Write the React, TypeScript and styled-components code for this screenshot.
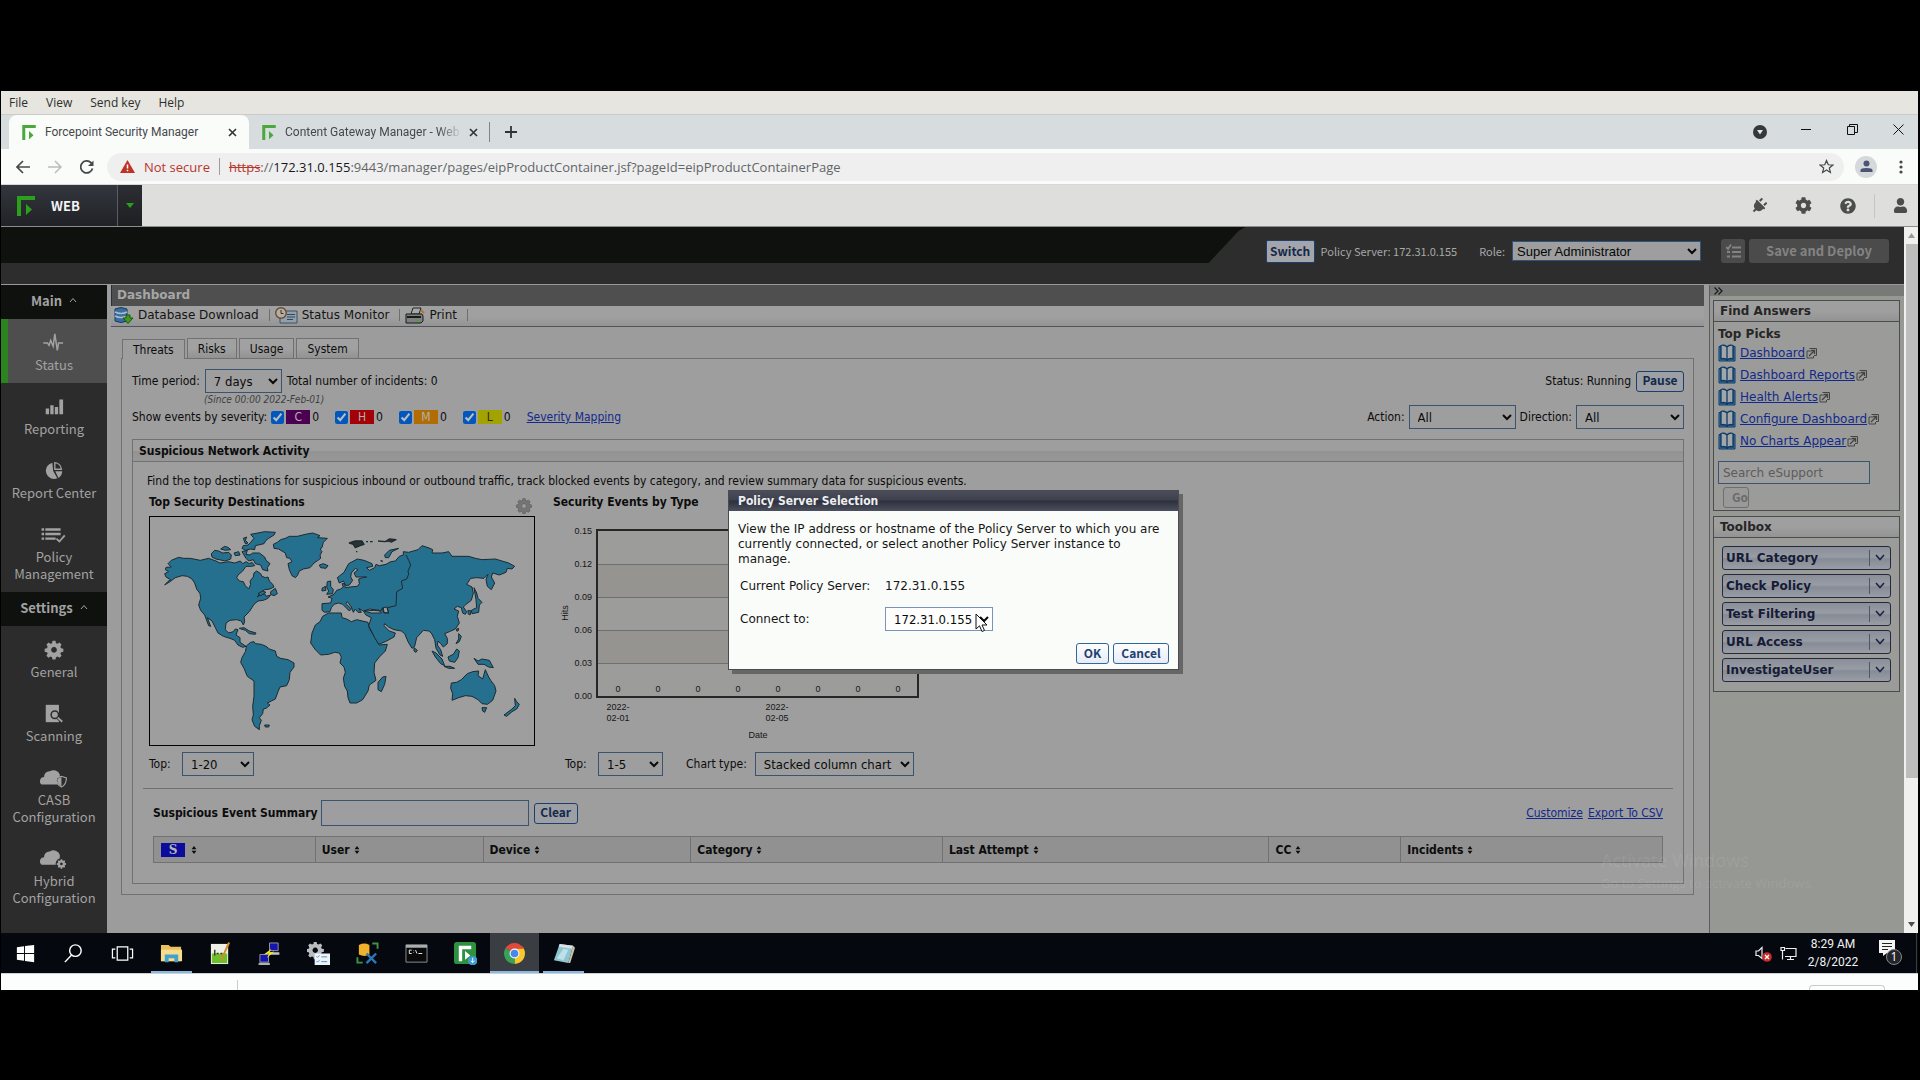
import React from 'react';
import styled, { createGlobalStyle, css } from 'styled-components';
import { FaPlug, FaCog, FaQuestionCircle, FaUser } from 'react-icons/fa';

const tahoma = '"DejaVu Sans Condensed", "DejaVu Sans", sans-serif';
const verdana = '"DejaVu Sans", sans-serif';
const source = '"Noto Sans CJK SC", "Noto Sans", sans-serif';
const segoe = '"Open Sans", "Noto Sans", sans-serif';
const segoeSmall = 'Roboto, "Open Sans", sans-serif';

const Global = createGlobalStyle`
  * { box-sizing: border-box; }
  body { margin: 0; background: #000; font: 12px/16px ${tahoma}; color: #0c0c0c; }
  h1, h2, h3, p { margin: 0; font-size: 12px; line-height: 16px; }
  button, input, select { font: inherit; color: inherit; margin: 0; }
  button { padding: 0; cursor: pointer; }
  svg { display: block; flex: none; }
`;

/* ---------- shell ---------- */
const Screen = styled.div`
  min-height: 100vh;
  padding: 91px 2px 90px 1px;
  display: flex;
  flex-direction: column;
`;
const Row = styled.div<{ $gap?: number }>`
  display: flex;
  align-items: center;
  gap: ${p => p.$gap ?? 0}px;
`;
const Spacer = styled.div`flex: 1;`;

const MenuBar = styled.nav`
  height: 24px;
  display: flex;
  align-items: center;
  gap: 18px;
  padding-left: 8px;
  background: #e6e5df;
  border-bottom: 1px solid #cbccca;
  font: 12px/16px ${segoe};
  color: #2c2e2e;
`;
const MenuItem = styled.button`
  border: 0;
  background: none;
`;

/* ---------- browser ---------- */
const TabStrip = styled.div`
  height: 34px;
  display: flex;
  align-items: center;
  padding-left: 8px;
  background: #d7dcdf;
  font: 12px/16px ${segoeSmall};
  color: #45494c;
`;
const BrowserTab = styled.div<{ $active?: boolean }>`
  width: 240px;
  height: 34px;
  display: flex;
  align-items: center;
  gap: 9px;
  padding: 0 10px 0 13px;
  border-radius: 8px 8px 0 0;
  background: ${p => (p.$active ? '#fafcfa' : 'transparent')};
`;
const TabName = styled.span<{ $fade?: boolean }>`
  flex: 1;
  white-space: nowrap;
  ${p => p.$fade && css`mask-image: linear-gradient(90deg, #000 88%, transparent 102%);`}
`;
const GlyphButton = styled.button<{ $w?: number }>`
  width: ${p => p.$w ?? 14}px;
  height: 24px;
  display: grid;
  place-items: center;
  border: 0;
  background: none;
  color: inherit;
`;
const TabDivider = styled.div`
  width: 1px;
  height: 20px;
  margin-right: 14px;
  background: #7f8488;
`;
const WindowButtons = styled.div`
  display: flex;
  align-items: center;
  gap: 22px;
  padding: 0 8px 6px 0;
  color: #111;
`;
const AddressBar = styled.div`
  height: 36px;
  display: flex;
  align-items: center;
  gap: 8px;
  padding: 0 6px 0 10px;
  background: #fafcfa;
  border-bottom: 1px solid #d6d8d6;
  color: #4c5054;
`;
const Omnibox = styled.div`
  flex: 1;
  height: 28px;
  display: flex;
  align-items: center;
  gap: 9px;
  padding: 0 10px 0 13px;
  border-radius: 14px;
  background: #efefef;
  font: 13px/20px ${segoe};
  color: #626568;
`;
const Danger = styled.span`color: #b8362c;`;
const Struck = styled.span`color: #b8362c; text-decoration: line-through;`;
const Host = styled.span`color: #17191a;`;
const Bar = styled.span`width: 1px; height: 17px; background: #9b9d9f;`;
const Avatar = styled.div`
  width: 22px;
  height: 22px;
  display: grid;
  place-items: center;
  border-radius: 50%;
  background: #d5d9dc;
  margin: 0 5px 0 3px;
`;

/* ---------- product header ---------- */
const AppBar = styled.header`
  height: 42px;
  display: flex;
  align-items: stretch;
  background: #dedfdd;
  border-bottom: 1px solid #8c8e8c;
  color: #4b4c4c;
`;
const Brand = styled.div`
  width: 116px;
  display: flex;
  align-items: center;
  gap: 16px;
  padding-left: 16px;
  background: linear-gradient(#33363d, #202226);
  font: 700 13px/20px ${source};
  color: #f3f4f4;
`;
const BrandMenu = styled.button`
  width: 25px;
  display: grid;
  place-items: center;
  border: 0;
  border-left: 1px solid #5a5d61;
  background: linear-gradient(#2c2e33, #1d1f22);
`;
const AppIcons = styled.div`
  display: flex;
  align-items: center;
  gap: 28px;
  padding-right: 10px;
`;
const IconDivider = styled.div`width: 1px; height: 24px; background: #c4c6c4; margin: 0 -10px;`;
const PlugWrap = styled.span`transform: rotate(45deg);`;

/* ---------- page ---------- */
const Viewport = styled.div`flex: 1; display: flex;`;
const Page = styled.div`
  flex: 1;
  min-width: 0;
  position: relative;
  display: flex;
  flex-direction: column;
  background: #9c9c9c;
`;
const ScrollTrack = styled.div`
  width: 14px;
  display: flex;
  flex-direction: column;
  align-items: center;
  justify-content: space-between;
  background: #f0f0ef;
  padding: 6px 0;
`;
const ScrollThumb = styled.div`
  width: 12px;
  height: 77%;
  margin: 6px 0 auto 2px;
  background: #bdbdbd;
`;
const TopBand = styled.div`
  height: 58px;
  display: flex;
  align-items: flex-start;
  gap: 20px;
  padding-right: 15px;
  background: #2d2d2d;
  border-bottom: 1px solid #999;
`;
const Wedge = styled.div`
  flex: 1;
  height: 36px;
  background: #0f110e;
  clip-path: polygon(0 0, 100% 0, calc(100% - 7px) 4px, calc(100% - 37px) 100%, 0 100%);
`;
const TopControls = styled.div`
  height: 48px;
  display: flex;
  align-items: center;
  font: 11px/16px ${source};
  color: #a8a8a8;
`;
const PolicyText = styled.span`margin: 0 22px 0 6px;`;
const RoleLabel = styled.label`margin-right: 7px;`;
const RoleSelect = styled.select`
  width: 189px;
  height: 20px;
  margin-right: 20px;
  border: 1px solid #2f5380;
  background: #9e9e9e;
  font: 13px/16px "Liberation Sans", Arial, sans-serif;
  color: #060606;
`;
const SwitchButton = styled.button`
  width: 49px;
  height: 23px;
  border: 1px solid #1f3f70;
  border-radius: 2px;
  background: #a3a5ab;
  font: 700 12px/16px ${source};
  color: #14294a;
`;
const FlatButton = styled.button<{ $w: number }>`
  width: ${p => p.$w}px;
  height: 24px;
  display: grid;
  place-items: center;
  border: 0;
  border-radius: 3px;
  background: #4b4b4b;
  font: 700 13px/20px ${source};
  color: #838383;
`;
const Body = styled.div`flex: 1; display: flex;`;

/* ---------- side navigation ---------- */
const SideNav = styled.nav`
  width: 106px;
  background: #2c2c2c;
  font: 13px/17px ${source};
  color: #a2a2a2;
`;
const NavHead = styled.button`
  width: 100%;
  height: 34px;
  display: flex;
  align-items: center;
  justify-content: center;
  gap: 7px;
  padding-bottom: 4px;
  border: 0;
  background: #0f110e;
  font: 700 13px/17px ${source};
`;
const NavItem = styled.a<{ $active?: boolean; $tall?: boolean }>`
  height: ${p => (p.$tall ? 81 : 64)}px;
  display: flex;
  flex-direction: column;
  align-items: center;
  gap: 4px;
  padding-top: 14px;
  text-align: center;
  text-decoration: none;
  color: inherit;
  ${p => p.$active && css`background: linear-gradient(90deg, #2c8420 7px, #4e4e4e 7px);`}
`;

/* ---------- centre ---------- */
const Centre = styled.main`
  flex: 1;
  min-width: 0;
  padding: 0 5px 0 4px;
`;
const TitleBar = styled.h1`
  height: 21px;
  padding-left: 5px;
  background: #4f4f4f;
  border-left: 1px solid #2a2d38;
  font: 700 12px/20px ${verdana};
  color: #a6a6a6;
`;
const ToolBar = styled.div`
  height: 21px;
  display: flex;
  align-items: center;
  gap: 5px;
  padding: 0 0 2px 3px;
  background: linear-gradient(#a0a0a0 55%, #949494);
  border-bottom: 1px solid #4f535a;
  font: 12px/16px ${verdana};
  color: #141414;
`;
const ToolButton = styled.button`
  display: flex;
  align-items: center;
  gap: 4px;
  border: 0;
  background: none;
`;
const ToolDivider = styled.span`width: 1px; height: 12px; margin-left: 5px; background: #6e6e6e;`;
const TabList = styled.div`
  display: flex;
  align-items: flex-end;
  gap: 2px;
  height: 31px;
  margin: 0 10px;
  padding-left: 1px;
`;
const PageTab = styled.button<{ $active?: boolean }>`
  height: 20px;
  padding: 1px 10px 0;
  border: 1px solid #717171;
  border-bottom: 0;
  background: ${p => (p.$active ? '#9e9e9e' : 'linear-gradient(#a1a1a1 50%, #929292)')};
  line-height: 18px;
  ${p => p.$active && css`margin-bottom: -1px; z-index: 1;`}
`;
const Panel = styled.section`
  margin: 0 10px;
  padding: 10px 9px 10px 10px;
  border: 1px solid #717171;
  background: #9e9e9e;
`;
const FilterRow = styled.div<{ $gap?: number }>`
  height: 24px;
  display: flex;
  align-items: center;
  gap: ${p => p.$gap ?? 5}px;
`;
const Since = styled.div`
  height: 12px;
  padding-left: 72px;
  font: italic 10px/14px ${tahoma};
  color: #3e3e3e;
`;
const Select = styled.select<{ $w: number }>`
  width: ${p => p.$w}px;
  height: 24px;
  padding: 0 0 0 4px;
  border: 1px solid #3a536f;
  background: #9e9e9e;
  font: 13px/16px ${tahoma};
  color: #0a0a0a;
`;
const SeverityGroup = styled.label`
  display: flex;
  align-items: center;
  gap: 2px;
  margin-right: 12px;
`;
const Check = styled.input`
  width: 13px;
  height: 13px;
  filter: brightness(0.74);
`;
const Badge = styled.span<{ $bg: string; $fg?: string }>`
  width: 24px;
  height: 14px;
  background: ${p => p.$bg};
  color: ${p => p.$fg ?? '#b0b0b0'};
  text-align: center;
  line-height: 14px;
`;
const Link = styled.a`color: #12298c; text-decoration: underline;`;
const SmallButton = styled.button<{ $w: number; $bright?: boolean }>`
  width: ${p => p.$w}px;
  height: 21px;
  padding-bottom: 2px;
  border: 1px solid ${p => (p.$bright ? '#35659d' : '#1d3f6c')};
  border-radius: 3px;
  background: ${p => (p.$bright ? 'linear-gradient(#fdfefe, #e6ebf6)' : '#9c9fa4')};
  font: 700 12px/16px ${source};
  color: ${p => (p.$bright ? '#1f3f70' : '#132a4c')};
`;
const Card = styled.section`
  margin-top: 10px;
  border: 1px solid #717171;
`;
const CardHead = styled.h2`
  height: 22px;
  padding-left: 6px;
  background: linear-gradient(#9e9e9e 50%, #939393 50%, #979797);
  border-bottom: 1px solid #717171;
  line-height: 22px;
`;
const Description = styled.p`padding: 11px 14px 5px;`;
const Columns = styled.div`
  display: flex;
  padding-left: 16px;
`;
const Column = styled.div<{ $w: number }>`width: ${p => p.$w}px;`;
const ColumnHead = styled.div`
  height: 22px;
  width: 386px;
  display: flex;
  justify-content: space-between;
  padding-right: 3px;
`;
const MapFrame = styled.div`
  width: 386px;
  height: 230px;
  border: 1px solid #000;
`;
const ControlRow = styled.div<{ $indent?: number }>`
  height: 24px;
  display: flex;
  align-items: center;
  gap: 8px;
  margin-top: 6px;
  padding-left: ${p => p.$indent ?? 0}px;
`;
const TopLabel = styled.label`width: 25px;`;
const ChartLabel = styled.label`margin-left: 15px;`;
const Rule = styled.hr`
  height: 1px;
  margin: 12px 10px 11px;
  border: 0;
  background: #717171;
`;
const Summary = styled.div`padding: 0 20px 20px;`;
const SummaryRow = styled.div`
  display: flex;
  align-items: center;
  gap: 5px;
  height: 26px;
  margin-bottom: 10px;
`;
const SummaryInput = styled.input`
  width: 208px;
  height: 26px;
  margin-left: -2px;
  border: 1px solid #3a536f;
  background: #9e9ea0;
`;
const EventTable = styled.table`
  width: 100%;
  table-layout: fixed;
  border-collapse: collapse;
`;
const Th = styled.th<{ $share: number }>`
  width: ${p => p.$share / 15.11}%;
  height: 26px;
  padding: 0 6px;
  border: 1px solid #717171;
  background: #909190;
  text-align: left;
`;
const SBadge = styled.span`
  width: 24px;
  height: 14px;
  margin: 0 2px 0 1px;
  background: #0b0b9c;
  color: #b5b5b5;
  font: 700 12px/14px "DejaVu Serif", serif;
  text-align: center;
`;

/* ---------- right pane ---------- */
const Aside = styled.aside`
  width: 195px;
  background: #969894;
  border-left: 1px solid #5c5d5c;
  font: 12px/16px ${verdana};
  color: #262626;
`;
const AsideTop = styled.button`
  width: 100%;
  height: 11px;
  display: flex;
  align-items: center;
  padding-left: 4px;
  border: 0;
  background: #787a77;
`;
const AsideBox = styled.section`
  margin: 4px 4px 5px 3px;
  border: 1px solid #4b4c4e;
  background: #9b9c9a;
`;
const AsideHead = styled.h2`
  height: 21px;
  padding-left: 6px;
  border-bottom: 1px solid #4b4c4e;
  background: linear-gradient(#9e9f9e 50%, #929392);
  line-height: 20px;
`;
const Picks = styled.div`padding: 4px 4px 2px;`;
const PickItem = styled.div`
  height: 22px;
  display: flex;
  align-items: center;
  gap: 4px;
`;
const PickLink = styled(Link)`margin-right: -3px;`;
const Search = styled.input`
  width: 152px;
  height: 23px;
  margin: 9px 0 3px;
  padding: 0 4px;
  border: 1px solid #3a536f;
  background: #9e9e9e;
  &::placeholder { color: #5c5c5c; opacity: 1; }
`;
const GoButton = styled.button`
  width: 26px;
  height: 21px;
  display: block;
  margin-left: 5px;
  padding: 0 0 2px 8px;
  border: 1px solid #6e6f6e;
  border-radius: 3px;
  background: #989998;
  font: 700 12px/16px ${source};
  color: #6b6b6b;
`;
const Tools = styled.div`
  display: flex;
  flex-direction: column;
  gap: 4px;
  padding: 8px 4px 9px 8px;
`;
const ToolItem = styled.button`
  height: 24px;
  display: flex;
  align-items: center;
  justify-content: space-between;
  padding: 0 5px 1px 3px;
  margin-right: 4px;
  border: 1px solid #232a3c;
  border-radius: 3px;
  background: linear-gradient(#8a8e98, #989ca4 45%, #868b96 55%, #9a9da4);
  font-weight: 700;
  color: #161b36;
`;
const ToolChevron = styled.span`
  height: 16px;
  display: grid;
  place-items: center;
  padding-left: 5px;
  border-left: 1px solid #4f566a;
`;

/* ---------- dialog ---------- */
const Overlay = styled.div`
  position: absolute;
  inset: 0 0 0 2px;
  display: flex;
  align-items: flex-start;
  justify-content: center;
  padding-top: 263px;
`;
const Dialog = styled.div`
  width: 451px;
  border: 1px solid #4a4b50;
  background: #fafcfa;
  box-shadow: 4px 4px 0 #666;
  font: 12px/15px ${verdana};
  color: #161616;
`;
const DialogHead = styled.h2`
  height: 20px;
  padding-left: 9px;
  background: linear-gradient(#4b4e5a, #3d404d 45%, #2d303c 50%, #4c4f5e);
  font: 700 12px/20px ${tahoma};
  color: #eeeff1;
`;
const DialogBody = styled.div`padding: 11px 9px 5px;`;
const DialogGrid = styled.div`
  display: grid;
  grid-template-columns: 145px auto;
  align-items: center;
  row-gap: 13px;
  padding: 12px 0 12px 2px;
  justify-content: start;
`;
const DialogSelect = styled(Select)`
  border-color: #7d92b8;
  background: #fdfefd;
`;
const SelectWrap = styled.div`position: relative; height: 24px;`;
const Cursor = styled.svg`position: absolute; left: 90px; top: 6px;`;
const DialogButtons = styled.div`
  display: flex;
  justify-content: flex-end;
  gap: 4px;
`;
const Watermark = styled.div`
  position: absolute;
  right: 71px;
  bottom: 40px;
  width: 232px;
  font: 13px/20px ${segoe};
  color: rgba(255, 255, 255, 0.09);
  white-space: nowrap;
`;
const WatermarkTitle = styled.div`font-size: 18px; line-height: 26px;`;

/* ---------- taskbar ---------- */
const TaskBar = styled.footer`
  height: 40px;
  display: flex;
  align-items: stretch;
  background: #05080f;
  color: #f2f2f2;
`;
const TaskButton = styled.button<{ $open?: boolean; $active?: boolean }>`
  width: 49px;
  display: flex;
  flex-direction: column;
  align-items: center;
  justify-content: center;
  position: relative;
  border: 0;
  background: ${p => (p.$active ? '#3a3d42' : 'none')};
  &:first-of-type { width: 48px; }
  &::after {
    content: '';
    position: absolute;
    bottom: 0;
    left: ${p => (p.$active ? 0 : 4)}px;
    right: ${p => (p.$active ? 0 : 4)}px;
    height: ${p => (p.$open || p.$active ? 2 : 0)}px;
    background: #8ab8e4;
  }
`;
const Tray = styled.div`
  display: flex;
  align-items: center;
  gap: 8px;
  margin-right: 1px;
  padding-right: 12px;
  border-right: 1px solid #3a3d42;
`;
const Clock = styled.div`
  width: 56px;
  margin-right: 9px;
  text-align: center;
  font: 12px/18px ${segoeSmall};
`;
const BottomStrip = styled.div`
  height: 17px;
  display: flex;
  align-items: flex-end;
  justify-content: space-between;
  padding: 0 33px 0 236px;
  background: #fcfdfd;
  border-top: 1px solid #ccd2d4;
`;
const StripMark = styled.div`width: 1px; height: 10px; background: #c9cbcc;`;
const StripBox = styled.div`
  width: 76px;
  height: 5px;
  border: 1px solid #c9cbcc;
  border-bottom: 0;
  border-radius: 4px 4px 0 0;
`;

/* ---------- drawings ---------- */
const Logo = ({ w, h, c }: { w: number; h: number; c: string }) => (
  <svg width={w} height={h} viewBox="0 0 18 20">
    <path d="M0 0H18V4H4V20H0Z" fill={c} />
    <path d="M9 8L15 13.500 9 19Z" fill={c} />
  </svg>
);
const Cross = () => (
  <svg width="9" height="9" viewBox="0 0 9 9"><path d="M1 1L8 8M8 1L1 8" stroke="#303336" strokeWidth="1.6" /></svg>
);
const Caret = () => (
  <svg width="8" height="6" viewBox="0 0 8 6"><path d="M1 5L4 1.500 7 5" fill="none" stroke="#a2a2a2" /></svg>
);
const SortMark = () => (
  <svg width="6" height="8" viewBox="0 0 7 10"><path d="M3.500 0L6.500 4H.5ZM3.500 10L.5 6H6.500Z" fill="#0c0c0c" /></svg>
);
const Book = () => (
  <svg width="18" height="18" viewBox="0 0 18 18">
    <path d="M1 2.500H3V15H9L9 17H1ZM17 2.500H15V15H9V17H17Z" fill="#3c7ca8" stroke="#0f3a66" />
    <path d="M9 3C7.500 1 4.500 .8 3 1.500V15C5 14.200 7.500 14.500 9 16C10.500 14.500 13 14.200 15 15V1.500C13.500 .8 10.500 1 9 3ZM9 3V16" fill="#a3a6a8" stroke="#0f3a66" strokeWidth="1.300" />
  </svg>
);
const External = () => (
  <svg width="11" height="11" viewBox="0 0 11 11">
    <path d="M3.500 .5H10.500V7.500H8M5 3L1 3V10H7.500V8" fill="none" stroke="#444" />
    <path d="M3 8L8 3M5 2.500H8.500V6" fill="none" stroke="#444" strokeWidth="1.400" />
  </svg>
);
const gearPath = 'M10.200 1h3.600l.6 2.800 1.900.8 2.400-1.500 2.500 2.500-1.500 2.400.8 1.900 2.800.6v3.600l-2.800.6-.8 1.900 1.500 2.400-2.500 2.500-2.400-1.500-1.900.8-.6 2.800h-3.600l-.6-2.800-1.900-.8-2.400 1.500-2.500-2.500 1.500-2.400-.8-1.900-2.800-.6v-3.600l2.800-.6.8-1.900-1.500-2.400 2.500-2.500 2.400 1.500 1.900-.8ZM12 8.500a3.500 3.500 0 1 0 .01 0Z';

const navIcons: Record<string, React.ReactNode> = {
  Status: <path d="M0 12H5L7 15 9 9 12 16 14 1 17 21 18.500 12H24" fill="none" stroke="currentColor" strokeWidth="1.800" transform="translate(-1)" />,
  Reporting: <path d="M2 14h4v7H2zM7.500 10h4v11h-4zM13 12h4v9h-4zM18.500 3h4.500v18h-4.500z" fill="currentColor" />,
  'Report Center': <g fill="currentColor"><path d="M10 2A10 10 0 1 0 16 21L11 12Z" /><path d="M13 2A9 9 0 0 1 21 10H13Z" fill="none" stroke="currentColor" strokeWidth="1.600" /><path d="M13.500 12.500H22A10 10 0 0 1 17.500 20.500Z" /></g>,
  'Policy Management': <g fill="currentColor"><path d="M-3 4h3v3h-3zM-3 9.500h3v3h-3zM-3 15h3v3h-3zM1.500 4H20v3H1.500zM1.500 9.500H20v3H1.500zM1.500 15H14v3H1.500z" /><path d="M15 16.500L18.500 20 25 12.500" fill="none" stroke="currentColor" strokeWidth="2.200" /></g>,
  General: <path d={gearPath} fill="currentColor" fillRule="evenodd" />,
  Scanning: <g><path d="M2 1H18V22H2Z" fill="currentColor" /><circle cx="13" cy="13" r="4.500" fill="#a2a2a2" stroke="#2c2c2c" strokeWidth="1.800" /><path d="M16 16L22 21.500" stroke="#2c2c2c" strokeWidth="4" /><path d="M16.500 16.500L22 21.500" stroke="currentColor" strokeWidth="2.400" /></g>,
  'CASB Configuration': <g><path d="M-3 20A5 5 0 0 1 0 11 6.500 6.500 0 0 1 7 4 8 8 0 0 1 19 8V20Z" fill="currentColor" /><path d="M15 12L21 10 27 12C27 18 25 21 21 23 17 21 15 18 15 12Z" fill="#2c2c2c" stroke="currentColor" strokeWidth="1.400" /><path d="M21 11L16 13C16 18 18 21 21 22Z" fill="currentColor" /></g>,
  'Hybrid Configuration': <g><path d="M-3 19A5 5 0 0 1 0 10 6.500 6.500 0 0 1 7 3 8 8 0 0 1 19 7V19Z" fill="currentColor" /><circle cx="21" cy="18" r="7" fill="#2c2c2c" /><path d={gearPath} fill="currentColor" fillRule="evenodd" transform="translate(15 12) scale(.5)" /></g>,
};
const NavGlyph = ({ name }: { name: string }) => (
  <svg width="20" height="19" viewBox="0 0 24 23" overflow="visible">{navIcons[name]}</svg>
);

const land = [
  'M108 286L118 275 126 270 112 262 108 252 120 246 110 240 112 233 128 232 118 222 128 212 150 203 165 206 185 206 215 212 240 206 262 214 274 220 300 216 318 220 335 214 342 222 352 216 362 222 370 218 378 228 368 230 352 230 342 244 328 256 324 264 332 274 344 276 350 288 360 298 366 284 364 274 374 262 376 250 384 244 396 252 400 260 410 264 418 262 422 274 432 284 436 292 424 298 408 300 396 308 386 322 398 314 408 312 412 320 426 316 418 326 404 332 388 334 376 344 362 366 346 382 348 396 344 406 338 394 324 390 304 392 292 400 290 420 300 430 314 426 320 418 328 420 322 436 334 444 334 458 346 466 352 470 342 473 328 466 318 452 304 446 284 440 268 430 260 414 250 394 236 384 246 410 240 408 228 376 216 362 210 346 216 326 214 312 204 298 198 280 190 268 176 260 160 258 140 264 124 276Z',
  'M434 164L446 158 456 150 470 146 482 140 506 140 530 134 552 130 574 138 566 144 596 146 584 158 582 166 580 174 574 178 580 186 574 196 576 206 568 212 556 220 544 234 524 238 512 244 506 258 500 264 490 258 482 240 478 222 490 216 484 206 474 204 470 190 450 178 436 176Z',
  'M440 128L408 126 388 130 366 134 376 146 366 158 358 166 344 168 340 176 350 182 366 178 378 180 380 168 406 162 412 152 420 146 436 136Z',
  'M248 192L258 182 270 184 282 190 300 188 308 196 306 208 290 214 262 208 250 202ZM276 178L288 170 300 174 306 180 290 182ZM316 190L330 186 334 196 320 198ZM344 146L354 142 350 152 358 160 350 162Z',
  'M340 186L356 182 352 194 364 196 372 190 392 190 408 202 412 212 424 222 416 234 418 244 402 240 396 226 380 222 374 210 360 214 352 206Z',
  'M426 306L440 296 446 312 436 318 426 314ZM388 312L402 304 412 308 396 318ZM332 416L346 414 362 424 382 430 380 434 362 432 350 422ZM572 226L584 222 598 228 592 236 576 234ZM408 706L422 706 420 712 410 712Z',
  'M354 468L366 458 376 456 380 462 398 464 412 470 422 478 440 484 444 500 456 506 478 510 496 520 496 532 484 548 482 570 474 588 454 592 448 606 440 628 428 634 416 640 424 646 412 656 404 658 402 672 392 684 398 692 392 708 392 720 378 710 370 690 374 676 372 650 376 620 376 574 356 560 346 536 336 518 340 504 350 486Z',
  'M582 380L600 370 620 370 638 370 640 384 654 388 668 396 684 390 718 398 722 416 740 446 752 466 776 464 770 484 752 502 738 520 736 548 742 572 722 586 718 604 702 630 684 640 664 640 658 624 656 604 648 590 644 566 650 548 646 532 634 520 638 502 632 490 618 488 600 494 576 496 560 480 546 460 550 430 560 406 574 396Z',
  'M580 342L606 340 610 326 598 322 616 314 624 302 636 298 644 292 640 282 648 282 650 294 664 292 686 290 692 282 690 268 702 264 714 262 682 262 676 250 688 240 680 236 668 250 666 262 672 272 662 286 652 288 644 274 632 280 626 264 646 248 660 222 686 208 706 212 730 222 732 230 714 234 722 242 738 234 742 224 752 228 772 224 786 216 800 214 812 200 824 196 824 186 840 188 868 180 880 168 904 176 912 180 910 190 940 190 960 186 970 200 1020 200 1040 206 1060 210 1100 208 1140 220 1158 230 1150 238 1136 236 1132 248 1112 256 1092 250 1088 262 1098 280 1088 300 1076 290 1072 270 1078 254 1066 266 1044 264 1026 266 1014 284 1030 292 1034 310 1028 332 1012 344 1004 352 1014 366 1010 374 1002 370 998 354 986 350 976 358 990 364 986 380 992 400 980 418 962 426 948 432 956 446 956 462 944 472 936 462 928 454 926 466 936 480 942 500 934 496 922 476 918 450 908 430 900 424 884 422 864 444 858 470 850 476 838 456 828 432 818 424 796 420 780 412 768 402 766 408 782 424 800 430 796 442 770 456 750 464 738 444 728 424 720 408 728 384 712 376 704 364 690 356 698 368 688 368 680 358 674 368 668 352 656 336 652 342 668 358 662 364 642 344 630 340 616 344 608 354 604 366 588 368 580 362Z',
  'M596 276L606 274 606 290 614 300 612 312 594 314 600 304 594 292ZM580 296L590 290 592 302 580 304Z',
  'M768 196L782 182 810 176 790 186 780 204 770 204ZM748 578L762 562 772 560 768 584 758 606 748 600Z',
  'M1036 294L1044 310 1048 326 1060 338 1052 346 1050 368 1030 372 1028 362 1044 354 1042 330ZM1018 362L1028 364 1024 376 1018 372ZM856 474L866 482 862 488 856 484ZM984 418L990 416 988 424 984 424ZM990 432L998 440 992 456 982 462 990 448Z',
  'M910 484L922 490 940 508 948 528 936 522 920 502ZM946 530L964 530 978 536 960 536ZM958 502L974 494 984 478 992 484 988 504 978 518 962 514ZM1036 506L1048 514 1060 508 1082 512 1094 534 1080 532 1066 524 1048 524Z',
  'M968 580L984 578 998 570 1016 552 1032 546 1050 544 1048 558 1062 568 1070 540 1080 562 1086 572 1098 588 1102 604 1092 632 1076 644 1060 642 1048 630 1030 620 1010 618 990 624 970 632 972 612 966 596ZM1060 654L1074 654 1068 668 1062 664Z',
  'M1158 626L1164 636 1172 644 1164 658 1150 666 1134 680 1126 676 1150 658 1160 648Z',
];
const islets = 'M662 160L680 154 700 154 706 164 694 168 680 174 674 164ZM712 156h6M724 156h8M748 154L770 156 782 148 802 150 786 158M684 184v4M756 212l6 4';
const borders = 'M832 196L840 212 846 226 838 244 840 254 834 268 818 274 822 296 804 306 802 348 776 354 780 370 764 368 762 354 756 364 736 362 706 364';
const WorldMap = () => (
  <svg width="384" height="228" viewBox="64 82 1152 684">
    <g fill="#25708f" stroke="#1c2a30" strokeWidth="3" strokeLinejoin="round">
      {land.map(d => <path key={d} d={d} />)}
      <path d={islets} fill="#2b3336" strokeWidth="4" />
      <path d="M764 354L774 352 780 370 766 370ZM706 364L722 358 752 362 758 370 728 370Z" fill="#9e9e9e" />
      <path d={borders} fill="none" />
    </g>
  </svg>
);

const ticks = ['0.15', '0.12', '0.09', '0.06', '0.03', '0.00'];
const days = [0, 1, 2, 3, 4, 5, 6, 7];
const EventChart = () => (
  <svg width="372" height="230" viewBox="553 516 372 230" fontFamily="Liberation Sans, Arial, sans-serif" fontSize="9" fill="#161616">
    <rect x="597" y="530" width="321" height="167" fill="#9c9c9b" />
    <path d="M597 564h321v33H597zM597 630h321v33H597z" fill="#969490" />
    <path d="M597 564.500h321M597 597.500h321M597 630.500h321M597 663.500h321" stroke="#6f6f6f" />
    <rect x="597" y="530" width="321" height="167" fill="none" stroke="#262626" strokeWidth="2" />
    {ticks.map((t, i) => <text key={t} x="592" y={534 + i * 33} textAnchor="end">{t}</text>)}
    {days.map(d => <text key={d} x={618 + d * 40} y="692" textAnchor="middle">0</text>)}
    {[['02-01', 618], ['02-05', 777]].map(([t, x]) => (
      <g key={t} textAnchor="middle"><text x={x} y="710">2022-</text><text x={x} y="721">{t}</text></g>
    ))}
    <text x="758" y="738" textAnchor="middle">Date</text>
    <text textAnchor="middle" transform="translate(568 613) rotate(-90)">Hits</text>
  </svg>
);

const taskIcons: { name: string; open?: boolean; active?: boolean; art: React.ReactNode }[] = [
  { name: 'Start', art: <path d="M3 5.500L10.500 4.500V11.500H3ZM11.500 4.300L21 3V11.500H11.500ZM3 12.500H10.500V19.500L3 18.500ZM11.500 12.500H21V21L11.500 19.700Z" fill="#fff" /> },
  { name: 'Search', art: <g fill="none" stroke="#fff" strokeWidth="1.500"><circle cx="14" cy="9" r="6" /><path d="M10 13.500L3 21" /></g> },
  { name: 'Task View', art: <path d="M6.500 5h11v14h-11zM4.500 7.500H1.500v9H4.500M19.500 7.500h3v9h-3" fill="none" stroke="#fff" strokeWidth="1.300" /> },
  { name: 'File Explorer', open: true, art: <g><path d="M1 3H9L11 5H22V20H1Z" fill="#e9c25c" /><path d="M1 8H23V20H1Z" fill="#f6dc8c" /><path d="M5 21V13H19V21H15V17H9V21Z" fill="#3fa2cf" /></g> },
  { name: 'Notepad++', art: <g><path d="M2 2H20V23H2Z" fill="#eef0e6" /><path d="M3 12H19V22H3Z" fill="#6fc02c" /><path d="M6 8v6M8 12h2M12 12h2" stroke="#333" strokeWidth="1.500" /><path d="M22 1L14 18 12 20 13 16 20 0Z" fill="#d68a2c" /></g> },
  { name: 'PuTTY', art: <g stroke="#999"><path d="M12 1h9v8h-9zM2 13h9v8H2z" fill="#1414b0" /><path d="M11 11h11v2H11zM1 22h11v2H1z" fill="#ccc" /><path d="M14 7L6 13 12 12 9 17 17 10 12 11Z" fill="#f4e52a" stroke="none" /></g> },
  { name: 'Services', art: <g><path d={gearPath} fill="#b9bdc0" fillRule="evenodd" transform="translate(-1 -1) scale(.8)" /><path d="M8 12H24V24H8Z" fill="#eef3f8" /><path d="M10 15l1 1 2-2M10 20l1 1 2-2M15 15.500h6M15 20.500h6" stroke="#4a8cc8" fill="none" /></g> },
  { name: 'SQL Configuration', art: <g><path d="M3 3Q9 0 14 3V13Q9 16 3 13Z" fill="#f0b02c" /><path d="M17 1.500H22.500V7M1.500 16V21.500H7" fill="none" stroke="#3f9446" strokeWidth="2" /><path d="M11 12L21 22M21 12L11 22" stroke="#2a78bc" strokeWidth="2.500" /></g> },
  { name: 'Command Prompt', art: <g><path d="M1 3H23V21H1Z" fill="#0a0a0a" stroke="#8d9093" /><path d="M1 3H23V6H1Z" fill="#a9adb0" /><path d="M7 8.500H4.500V12H7M9 9v.5M9 11v.5M11 8.500L12.500 12M14 12h4" fill="none" stroke="#eee" /></g> },
  { name: 'Forcepoint', art: <g><rect x="0" y="0" width="23" height="23" rx="3" fill="#2e9140" /><path d="M5 4H18V7.500H8.500V20H5ZM11.500 9.500L17 14 11.500 18.500Z" fill="#fff" /><circle cx="19.500" cy="19.500" r="5" fill="#3d9bd4" /><path d="M19.500 16.500v5M17.500 19.500l2 2 2-2" stroke="#fff" fill="none" /></g> },
  { name: 'Chrome', active: true, art: <g><path d="M12 12L2.500 6.500A11 11 0 0 1 21.500 6.500Z" fill="#dd4b3c" /><path d="M12 12L21.500 6.500A11 11 0 0 1 12 23Z" fill="#f7c72e" /><path d="M12 12V23A11 11 0 0 1 2.500 6.500Z" fill="#37a356" /><path d="M12 7H21.800L17 14Z" fill="#f7c72e" /><path d="M12 6.500H21.800A11 11 0 0 0 21 5L12 5Z" fill="#dd4b3c" /><circle cx="12" cy="12" r="5.200" fill="#f4f4f4" /><circle cx="12" cy="12" r="4" fill="#4688ee" /></g> },
  { name: 'Notepad', open: true, art: <g><path d="M8 2L22 4 17 22 2 19Z" fill="#8fc4d2" /><path d="M8 2L22 4 21 7 7 5Z" fill="#d7e2e4" /><path d="M22 4L24 6 19 22H17Z" fill="#c8c4a8" /><path d="M5 17L12 7 17 8 12 19Z" fill="#bfe0e6" /></g> },
];

/* ---------- content ---------- */
const mainNav = ['Status', 'Reporting', 'Report Center', 'Policy Management'];
const settingsNav = ['General', 'Scanning', 'CASB Configuration', 'Hybrid Configuration'];
const severities = [['C', '#4b0052'], ['H', '#a30008'], ['M', '#b26c04'], ['L', '#a3a300']];
const columns: [string, number][] = [['User', 168], ['Device', 208], ['Category', 252], ['Last Attempt', 327], ['CC', 132], ['Incidents', 262]];
const picks = ['Dashboard', 'Dashboard Reports', 'Health Alerts', 'Configure Dashboard', 'No Charts Appear'];
const tools = ['URL Category', 'Check Policy', 'Test Filtering', 'URL Access', 'InvestigateUser'];

const NavEntry = ({ name, active }: { name: string; active?: boolean }) => (
  <NavItem href="#" $active={active} $tall={/Management|Configuration/.test(name)}>
    <NavGlyph name={name} />
    <span>{name}</span>
  </NavItem>
);

export default function App() {
  return (
    <>
      <Global />
      <Screen>
        <MenuBar>
          {['File', 'View', 'Send key', 'Help'].map(m => <MenuItem key={m}>{m}</MenuItem>)}
        </MenuBar>
        <TabStrip>
          <BrowserTab $active>
            <Logo w={14} h={15} c="#4aa83c" />
            <TabName>Forcepoint Security Manager</TabName>
            <GlyphButton aria-label="Close tab"><Cross /></GlyphButton>
          </BrowserTab>
          <BrowserTab>
            <Logo w={14} h={15} c="#4aa83c" />
            <TabName $fade>Content Gateway Manager - Web</TabName>
            <GlyphButton aria-label="Close tab"><Cross /></GlyphButton>
          </BrowserTab>
          <TabDivider />
          <GlyphButton aria-label="New tab">
            <svg width="12" height="12" viewBox="0 0 12 12"><path d="M6 0V12M0 6H12" stroke="#303336" strokeWidth="1.800" /></svg>
          </GlyphButton>
          <Spacer />
          <WindowButtons>
            <GlyphButton $w={24} aria-label="Search tabs">
              <svg width="14" height="20" viewBox="0 0 14 20"><circle cx="7" cy="13" r="7" fill="#36393b" /><path d="M4 11H10L7 15.500Z" fill="#e6e8e8" /></svg>
            </GlyphButton>
            <GlyphButton $w={24} aria-label="Minimize">
              <svg width="10" height="10" viewBox="0 0 10 10"><path d="M0 5.500H10" stroke="#111" /></svg>
            </GlyphButton>
            <GlyphButton $w={24} aria-label="Restore">
              <svg width="11" height="11" viewBox="0 0 11 11"><path d="M.5 2.500H7.500V10.500H.5ZM2.500 2.500V.5H10.500V8.500H7.500" fill="none" stroke="#111" /></svg>
            </GlyphButton>
            <GlyphButton $w={24} aria-label="Close">
              <svg width="11" height="11" viewBox="0 0 11 11"><path d="M.5 .5L10.500 10.500M10.500 .5L.5 10.500" stroke="#111" /></svg>
            </GlyphButton>
          </WindowButtons>
        </TabStrip>
        <AddressBar>
          <GlyphButton $w={24} aria-label="Back">
            <svg width="14" height="14" viewBox="0 0 14 14"><path d="M14 7H1.500M7 1L1 7 7 13" fill="none" stroke="#45494c" strokeWidth="1.700" /></svg>
          </GlyphButton>
          <GlyphButton $w={24} aria-label="Forward">
            <svg width="14" height="14" viewBox="0 0 14 14"><path d="M0 7H12.500M7 1L13 7 7 13" fill="none" stroke="#b9bcbd" strokeWidth="1.500" /></svg>
          </GlyphButton>
          <GlyphButton $w={24} aria-label="Reload">
            <svg width="14" height="14" viewBox="0 0 14 14"><path d="M12.500 8.500A6 6 0 1 1 11 2.700L12.500 4.500" fill="none" stroke="#45494c" strokeWidth="1.800" /><path d="M13.500 .5V6H8Z" fill="#45494c" /></svg>
          </GlyphButton>
          <Omnibox>
            <svg width="15" height="13" viewBox="0 0 15 13"><path d="M7.500 0L15 13H0Z" fill="#bf3327" /><path d="M7.500 4.500V8.500M7.500 9.800V11.200" stroke="#fff" strokeWidth="1.500" /></svg>
            <Danger>Not secure</Danger>
            <Bar />
            <span><Struck>https</Struck>://<Host>172.31.0.155</Host>:9443/manager/pages/eipProductContainer.jsf?pageId=eipProductContainerPage</span>
            <Spacer />
            <svg width="15" height="15" viewBox="0 0 24 24"><path d="M12 2.500L14.800 9.200 22 9.800 16.500 14.500 18.200 21.500 12 17.700 5.800 21.500 7.500 14.500 2 9.800 9.200 9.200Z" fill="none" stroke="#45494c" strokeWidth="2" /></svg>
          </Omnibox>
          <Avatar><svg width="13" height="13" viewBox="0 0 13 13"><circle cx="6.500" cy="3.500" r="3" fill="#4b5472" /><path d="M.5 12V10Q.5 8 6.500 8 12.500 8 12.500 10V12Z" fill="#4b5472" /></svg></Avatar>
          <GlyphButton $w={22} aria-label="Browser menu">
            <svg width="4" height="14" viewBox="0 0 4 14"><g fill="#45494c"><circle cx="2" cy="2" r="1.600" /><circle cx="2" cy="7" r="1.600" /><circle cx="2" cy="12" r="1.600" /></g></svg>
          </GlyphButton>
        </AddressBar>
        <AppBar>
          <Brand><Logo w={18} h={20} c="#2ba01c" />WEB</Brand>
          <BrandMenu aria-label="Modules"><svg width="8" height="5" viewBox="0 0 8 5"><path d="M0 0H8L4 5Z" fill="#2ba01c" /></svg></BrandMenu>
          <Spacer />
          <AppIcons>
            <PlugWrap><FaPlug size={16} /></PlugWrap>
            <FaCog size={17} />
            <FaQuestionCircle size={16} />
            <IconDivider />
            <FaUser size={15} />
          </AppIcons>
        </AppBar>

        <Viewport>
          <Page>
            <TopBand>
              <Wedge />
              <TopControls>
                <SwitchButton>Switch</SwitchButton>
                <PolicyText>Policy Server: 172.31.0.155</PolicyText>
                <RoleLabel htmlFor="role">Role:</RoleLabel>
                <RoleSelect id="role"><option>Super Administrator</option></RoleSelect>
                <Row $gap={4}>
                  <FlatButton $w={24} aria-label="Pending changes">
                    <svg width="15" height="14" viewBox="0 0 15 14"><path d="M6 3.500H15M6 8H15M6 12.500H15M1 8H4M1 12.500H4M0 3L2 5 5 .5" fill="none" stroke="#838383" strokeWidth="1.800" /></svg>
                  </FlatButton>
                  <FlatButton $w={140}>Save and Deploy</FlatButton>
                </Row>
              </TopControls>
            </TopBand>
            <Body>
              <SideNav>
                <NavHead>Main <Caret /></NavHead>
                {mainNav.map((n, i) => <NavEntry key={n} name={n} active={i === 0} />)}
                <NavHead>Settings <Caret /></NavHead>
                {settingsNav.map(n => <NavEntry key={n} name={n} />)}
              </SideNav>

              <Centre>
                <TitleBar>Dashboard</TitleBar>
                <ToolBar>
                  <ToolButton>
                    <svg width="20" height="17" viewBox="0 0 20 17"><path d="M1 2Q7 -1 13 2V14Q7 17 1 14Z" fill="#3a6ea0" stroke="#173a62" /><path d="M1 5Q7 8 13 5M1 9Q7 12 13 9" fill="none" stroke="#a9bccb" strokeWidth="1.500" /><path d="M12 8H16V11H19L14 16.500 9 11H12Z" fill="#3f9a1f" stroke="#1d5410" /></svg>
                    Database Download
                  </ToolButton>
                  <ToolDivider />
                  <ToolButton>
                    <svg width="23" height="17" viewBox="0 0 23 17"><path d="M7 4H22V16H5V4Z" fill="#8fa0ae" stroke="#42505c" /><path d="M12 7.500H20M12 10H20M12 12.500H18" stroke="#33475c" /><circle cx="6" cy="6" r="5.300" fill="#b3ada2" stroke="#6a4a32" strokeWidth="1.400" /><path d="M6 3V6.500H8.500" fill="none" stroke="#333" /></svg>
                    Status Monitor
                  </ToolButton>
                  <ToolDivider />
                  <ToolButton>
                    <svg width="20" height="17" viewBox="0 0 20 17"><path d="M6 7L8 1H16L14 7Z" fill="#a5a8a8" stroke="#222" /><path d="M1 7H17L18 9V14L16 16H1Z" fill="#7d8080" stroke="#1b1b1b" /><path d="M2 10H16" stroke="#1b1b1b" strokeWidth="2" /><path d="M11 13.500H14" stroke="#49a52c" strokeWidth="1.500" /><path d="M16 3L19 6" stroke="#b5722f" strokeWidth="2" /></svg>
                    Print
                  </ToolButton>
                  <ToolDivider />
                </ToolBar>
                <TabList role="tablist">
                  {['Threats', 'Risks', 'Usage', 'System'].map((t, i) => (
                    <PageTab key={t} role="tab" $active={i === 0}>{t}</PageTab>
                  ))}
                </TabList>
                <Panel>
                  <FilterRow>
                    <label htmlFor="period">Time period:</label>
                    <Select id="period" $w={77}><option>7 days</option></Select>
                    <span>Total number of incidents: 0</span>
                    <Spacer />
                    <span>Status: Running</span>
                    <SmallButton $w={48}>Pause</SmallButton>
                  </FilterRow>
                  <Since>(Since 00:00 2022-Feb-01)</Since>
                  <FilterRow $gap={4}>
                    <span>Show events by severity:</span>
                    {severities.map(([l, c]) => (
                      <SeverityGroup key={l}>
                        <Check type="checkbox" defaultChecked />
                        <Badge $bg={c} $fg={l === 'L' ? '#2a2a2a' : undefined}>{l}</Badge>
                        <span>0</span>
                      </SeverityGroup>
                    ))}
                    <Link href="#">Severity Mapping</Link>
                    <Spacer />
                    <label htmlFor="action">Action:</label>
                    <Select id="action" $w={107}><option>All</option></Select>
                    <label htmlFor="direction">Direction:</label>
                    <Select id="direction" $w={108}><option>All</option></Select>
                  </FilterRow>

                  <Card>
                    <CardHead>Suspicious Network Activity</CardHead>
                    <Description>
                      Find the top destinations for suspicious inbound or outbound traffic, track blocked events by category, and review summary data for suspicious events.
                    </Description>
                    <Columns>
                      <Column $w={404}>
                        <ColumnHead>
                          <h3>Top Security Destinations</h3>
                          <svg width="16" height="20" viewBox="0 -6 24 30"><path d={gearPath} fill="#757575" stroke="#5c5c5c" fillRule="evenodd" /></svg>
                        </ColumnHead>
                        <MapFrame><WorldMap /></MapFrame>
                        <ControlRow>
                          <TopLabel htmlFor="top-dest">Top:</TopLabel>
                          <Select id="top-dest" $w={72}><option>1-20</option></Select>
                        </ControlRow>
                      </Column>
                      <Column $w={404}>
                        <ColumnHead><h3>Security Events by Type</h3></ColumnHead>
                        <EventChart />
                        <ControlRow $indent={12}>
                          <TopLabel htmlFor="top-events">Top:</TopLabel>
                          <Select id="top-events" $w={65}><option>1-5</option></Select>
                          <ChartLabel htmlFor="chart-type">Chart type:</ChartLabel>
                          <Select id="chart-type" $w={159}><option>Stacked column chart</option></Select>
                        </ControlRow>
                      </Column>
                    </Columns>
                    <Rule />
                    <Summary>
                      <SummaryRow>
                        <h3><label htmlFor="summary">Suspicious Event Summary</label></h3>
                        <SummaryInput id="summary" />
                        <SmallButton $w={44}>Clear</SmallButton>
                        <Spacer />
                        <Link href="#">Customize</Link>
                        <Link href="#">Export To CSV</Link>
                      </SummaryRow>
                      <EventTable>
                        <thead>
                          <tr>
                            <Th $share={162}><Row $gap={4}><SBadge>S</SBadge><SortMark /></Row></Th>
                            {columns.map(([c, w]) => (
                              <Th key={c} $share={w}><Row $gap={4}>{c}<SortMark /></Row></Th>
                            ))}
                          </tr>
                        </thead>
                      </EventTable>
                    </Summary>
                  </Card>
                </Panel>
              </Centre>

              <Aside>
                <AsideTop aria-label="Collapse pane">
                  <svg width="9" height="8" viewBox="0 0 9 8"><path d="M.5 .5L4 4 .5 7.500M4.500 .5L8 4 4.500 7.500" fill="none" stroke="#1c1c1c" strokeWidth="1.300" /></svg>
                </AsideTop>
                <AsideBox>
                  <AsideHead>Find Answers</AsideHead>
                  <Picks>
                    <h3>Top Picks</h3>
                    {picks.map(p => (
                      <PickItem key={p}><Book /><PickLink href="#">{p}</PickLink><External /></PickItem>
                    ))}
                    <Search placeholder="Search eSupport" aria-label="Search eSupport" />
                    <GoButton>Go</GoButton>
                  </Picks>
                </AsideBox>
                <AsideBox>
                  <AsideHead>Toolbox</AsideHead>
                  <Tools>
                    {tools.map(t => (
                      <ToolItem key={t}>{t}
                        <ToolChevron><svg width="10" height="7" viewBox="0 0 10 7"><path d="M1 1L5 5.500 9 1" fill="none" stroke="#1f2540" strokeWidth="1.600" /></svg></ToolChevron>
                      </ToolItem>
                    ))}
                  </Tools>
                </AsideBox>
              </Aside>
            </Body>

            <Overlay>
              <Dialog role="dialog" aria-labelledby="dialog-title">
                <DialogHead id="dialog-title">Policy Server Selection</DialogHead>
                <DialogBody>
                  <div>View the IP address or hostname of the Policy Server to which you are currently connected, or select another Policy Server instance to manage.</div>
                  <DialogGrid>
                    <span>Current Policy Server:</span><span>172.31.0.155</span>
                    <label htmlFor="server">Connect to:</label>
                    <SelectWrap>
                      <DialogSelect id="server" $w={108}><option>172.31.0.155</option></DialogSelect>
                      <Cursor width="13" height="20" viewBox="0 0 13 20"><path d="M1 1V16L4.500 12.800 7 18.500 9.500 17.400 7 12H12Z" fill="#fff" stroke="#111" /></Cursor>
                    </SelectWrap>
                  </DialogGrid>
                  <DialogButtons>
                    <SmallButton $w={33} $bright>OK</SmallButton>
                    <SmallButton $w={56} $bright>Cancel</SmallButton>
                  </DialogButtons>
                </DialogBody>
              </Dialog>
            </Overlay>
            <Watermark>
              <WatermarkTitle>Activate Windows</WatermarkTitle>
              Go to Settings to activate Windows.
            </Watermark>
          </Page>
          <ScrollTrack>
            <svg width="7" height="5" viewBox="0 0 7 5"><path d="M0 5H7L3.500 0Z" fill="#9a9a9a" /></svg>
            <ScrollThumb />
            <svg width="7" height="5" viewBox="0 0 7 5"><path d="M0 0H7L3.500 5Z" fill="#4c4c4c" /></svg>
          </ScrollTrack>
        </Viewport>

        <TaskBar>
          {taskIcons.map(t => (
            <TaskButton key={t.name} aria-label={t.name} $open={t.open} $active={t.active}>
              <svg width="23" height="23" viewBox="0 0 24 24">{t.art}</svg>
            </TaskButton>
          ))}
          <Spacer />
          <Tray>
            <svg width="17" height="17" viewBox="0 0 17 17"><path d="M1 6H3.500L7 2.500V13.500L3.500 10.500H1Z" fill="none" stroke="#eee" strokeWidth="1.200" /><circle cx="12" cy="12" r="4.800" fill="#c62b2b" /><path d="M10 10L14 14M14 10L10 14" stroke="#fff" strokeWidth="1.300" /></svg>
            <svg width="17" height="15" viewBox="0 0 17 15"><path d="M5.500 2.500H16V10.500H5M10.500 10.500V13.500M7 13.500H14M1 1.500H4.500V4.500H1ZM2.500 4.500V13.500" fill="none" stroke="#eee" strokeWidth="1.200" /></svg>
            <Clock>8:29 AM<br />2/8/2022</Clock>
            <svg width="26" height="26" viewBox="0 0 26 26"><path d="M1 0H17V13H9L5 16V13H1Z" fill="#f4f4f4" /><path d="M4 3.500H14M4 6.500H14M4 9.500H10" stroke="#222" /><circle cx="16" cy="17" r="7.500" fill="#24262b" stroke="#85888b" /><text x="16" y="21" textAnchor="middle" fontFamily="Open Sans, sans-serif" fontSize="12" fill="#fff">1</text></svg>
          </Tray>
        </TaskBar>
        <BottomStrip><StripMark /><StripBox /></BottomStrip>
      </Screen>
    </>
  );
}
